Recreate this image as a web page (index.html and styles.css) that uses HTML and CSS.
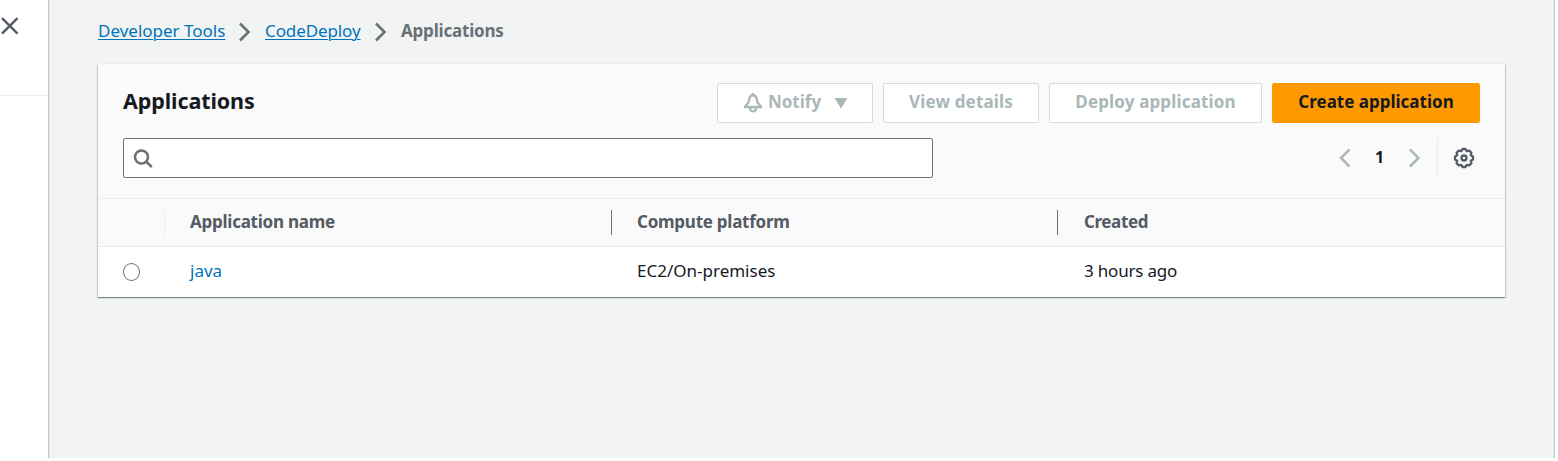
FILE: index.html
```html
<!DOCTYPE html>
<html lang="en">
<head>
<meta charset="utf-8">
<title>Applications</title>
<link rel="stylesheet" href="styles.css">
</head>
<body>
<div class="shell">
  <aside class="sidebar">
    <div class="sidebar-head">
      <svg class="close" width="20" height="20" viewBox="0 0 20 20"><path d="M2 2.2 17.5 17.7M17.5 2.2 2 17.7"/></svg>
    </div>
  </aside>
  <main class="main">
    <nav class="crumbs">
      <a class="t-dev" href="#">Developer Tools</a>
      <svg class="crumb-sep" width="14" height="20" viewBox="0 0 14 20"><path d="M2 1.5 10.5 10 2 18.5"/></svg>
      <a class="t-cd" href="#">CodeDeploy</a>
      <svg class="crumb-sep" width="14" height="20" viewBox="0 0 14 20"><path d="M2 1.5 10.5 10 2 18.5"/></svg>
      <span class="t-cur">Applications</span>
    </nav>
    <section class="card">
      <header class="card-head">
        <div class="title-row">
          <h1 class="title">Applications</h1>
          <div class="actions">
            <button class="btn notify" disabled>
              <svg class="bell" width="20" height="20" viewBox="0 0 20 20"><path d="M10 0V2.5M1.8 14H18.2L14.4 9.2 13.6 5.6C13.1 3.4 12 2.2 10 2.2S6.9 3.4 6.4 5.6L5.6 9.2ZM7 14.5C7 17.2 8.2 18.4 10 18.4S13 17.2 13 14.5"/></svg>
              <span>Notify</span>
              <svg class="caret" width="14" height="12" viewBox="0 0 14 12"><path d="M.5 1H13.5L7 11.5Z"/></svg>
            </button>
            <button class="btn view" disabled>View details</button>
            <button class="btn deploy" disabled>Deploy application</button>
            <button class="btn create">Create application</button>
          </div>
        </div>
        <div class="tools-row">
          <label class="search">
            <svg class="magnifier" width="20" height="20" viewBox="0 0 20 20"><circle cx="8.5" cy="8" r="6.5"/><path d="M13 12.5 18.8 18"/></svg>
            <input class="search-input" type="text" aria-label="Search">
          </label>
          <div class="pager">
            <svg class="arrow" width="14" height="20" viewBox="0 0 14 20"><path d="M11.5 1.5 3 10 11.5 18.5"/></svg>
            <span class="page">1</span>
            <svg class="arrow next" width="14" height="20" viewBox="0 0 14 20"><path d="M2 1.5 10.5 10 2 18.5"/></svg>
            <span class="rule"></span>
            <svg class="gear" width="22" height="22" viewBox="-11 -11 22 22"><path d="M-1.5-9H1.5L2.7-6.8 5.3-7.4 7.4-5.3 6.8-2.7 9-1.5V1.5L6.8 2.7 7.4 5.3 5.3 7.4 2.7 6.8 1.5 9H-1.5L-2.7 6.8-5.3 7.4-7.4 5.3-6.8 2.7-9 1.5V-1.5L-6.8-2.7-7.4-5.3-5.3-7.4-2.7-6.8Z"/><circle r="2.5"/></svg>
          </div>
        </div>
      </header>
      <div class="row head">
        <div class="cell pick"></div>
        <div class="cell">Application name</div>
        <div class="cell">Compute platform</div>
        <div class="cell last">Created</div>
      </div>
      <div class="row data">
        <div class="cell pick"><span class="radio"></span></div>
        <div class="cell"><a href="#">java</a></div>
        <div class="cell">EC2/On-premises</div>
        <div class="cell last ago">3 hours ago</div>
      </div>
    </section>
  </main>
</div>
</body>
</html>
```
FILE: styles.css
```css
* { box-sizing: border-box; }
body {
  margin: 0;
  background: #fff;
  color: #16191f;
  font: 17px/24px "Noto Sans", "Open Sans", sans-serif;
}
svg { display: block; flex: none; fill: none; stroke: #687078; stroke-width: 2.5; }
.shell { display: flex; width: 1555px; height: 458px; }
.sidebar { width: 48px; background: #fff; }
.sidebar-head { height: 96px; padding-top: 16px; border-bottom: 1px solid #eaeded; }
.close { stroke: #545b64; stroke-width: 2.4; }
.main {
  flex: 1;
  padding: 19px 48px 0 49px;
  background: #f2f3f3;
  border-left: 1px solid #bfc7c9;
  border-right: 1px solid #bfc7c9;
  box-shadow: inset 1px 0 #e6e9e9, inset -1px 0 #e6e9e9;
}
.crumbs { display: flex; align-items: center; height: 24px; white-space: nowrap; }
.crumbs a { color: #0073bb; text-decoration: underline; text-underline-offset: 2px; text-decoration-thickness: 1px; }
.crumb-sep { margin: 2px 13px 0 13px; }
.t-dev { width: 127px; }
.t-cd { width: 96px; letter-spacing: -.1px; }
.t-cur { color: #687078; font-weight: 700; letter-spacing: -.2px; }
.card {
  margin-top: 21px;
  width: 1407px;
  height: 233px;
  background: #fff;
  box-shadow: 0 1px 1px 0 rgba(0, 28, 36, .3), 1px 1px 1px 0 rgba(0, 28, 36, .15), -1px 1px 1px 0 rgba(0, 28, 36, .15), 0 -1px 0 #eaeded;
}
.card-head { height: 135px; padding: 19px 25px 0; background: #fafafa; border-bottom: 1px solid #eaeded; }
.title-row, .tools-row { display: flex; justify-content: space-between; }
.title { margin: 3px 0 0; font-size: 21.5px; line-height: 30px; font-weight: 700; letter-spacing: -.1px; }
.actions { display: flex; gap: 10px; }
.btn {
  display: flex;
  align-items: center;
  justify-content: center;
  height: 40px;
  padding: 0 0 2px;
  border: 1px solid #d5dbdb;
  border-radius: 2px;
  background: #fff;
  color: #aab7b8;
  font: 700 17px/24px "Noto Sans", "Open Sans", sans-serif;
  white-space: nowrap;
}
.notify { width: 156px; }
.view { width: 156px; letter-spacing: .15px; }
.deploy { width: 213px; letter-spacing: .15px; }
.create { width: 208px; background: #ff9900; border-color: #ff9900; color: #16191f; }
.bell { margin: 2px 5px 0 1px; stroke: #aab7b8; stroke-width: 2.4; stroke-linejoin: round; }
.caret { margin: 2px 0 0 13px; fill: #aab7b8; stroke: none; }
.tools-row { margin-top: 15px; }
.search {
  display: flex;
  align-items: center;
  width: 810px;
  height: 40px;
  padding-left: 9px;
  background: #fff;
  border: 1px solid #687078;
  border-radius: 2px;
}
.search-input { flex: 1; height: 30px; border: 0; outline: 0; background: transparent; }
.magnifier { margin-top: 1px; }
.pager { display: flex; align-items: center; height: 40px; padding-right: 5px; }
.arrow { stroke: #aab7b8; }
.page { width: 56px; padding: 0 1px 2px 0; text-align: center; font-size: 16px; font-weight: 700; }
.rule { width: 1px; height: 40px; margin: 0 15px 0 15px; background: #eaeded; }
.gear { stroke: #545b64; stroke-width: 2.3; stroke-linejoin: round; }
.row { display: grid; grid-template-columns: 67px 447px 446px 1fr; align-items: center; }
.cell { display: flex; align-items: center; height: 25px; padding: 0 0 2px 25px; white-space: nowrap; }
.head { height: 48px; background: #fafafa; border-bottom: 1px solid #eaeded; color: #545b64; font-weight: 700; letter-spacing: -.25px; }
.head .cell { border-right: 1px solid #687078; }
.head .pick { border-color: #eaeded; }
.head .last { border: 0; letter-spacing: -.4px; }
.cell.last { padding-left: 26px; }
.data { height: 50px; }
.data .pick { padding-bottom: 0; }
.data a { color: #0073bb; text-decoration: none; }
.ago { letter-spacing: -.2px; }
.radio { width: 17px; height: 18px; border: 1px solid #687078; border-radius: 50%; background: #fff; }
```
